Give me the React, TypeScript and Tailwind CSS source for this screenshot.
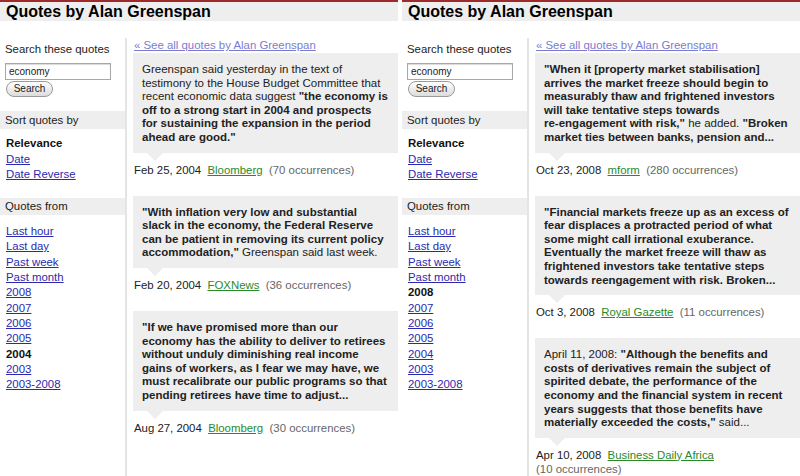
import type { ReactNode } from 'react';

type Quote = {
  body: ReactNode;
  date: string;
  source: string;
  count: string;
};

type Panel = {
  sortActive: string;
  yearActive: string;
  quotes: Quote[];
};

const sortOptions = ['Relevance', 'Date', 'Date Reverse'];
const ranges = ['Last hour', 'Last day', 'Past week', 'Past month', '2008', '2007', '2006', '2005', '2004', '2003', '2003-2008'];

const panels: Panel[] = [
  {
    sortActive: 'Relevance',
    yearActive: '2004',
    quotes: [
      {
        body: (
          <>
            Greenspan said yesterday in the text of testimony to the House Budget Committee that recent economic data suggest{' '}
            <b>"the economy is off to a strong start in 2004 and prospects for sustaining the expansion in the period ahead are good."</b>
          </>
        ),
        date: 'Feb 25, 2004',
        source: 'Bloomberg',
        count: '(70 occurrences)',
      },
      {
        body: (
          <>
            <b>
              "With inflation very low and substantial
              <br />
              slack in the economy, the Federal Reserve can be patient in removing its current policy accommodation,"
            </b>{' '}
            Greenspan said last week.
          </>
        ),
        date: 'Feb 20, 2004',
        source: 'FOXNews',
        count: '(36 occurrences)',
      },
      {
        body: (
          <b>
            "If we have promised more than our economy has the ability to deliver to retirees without unduly diminishing real income gains of workers, as I fear we may have, we must recalibrate our public programs so that pending retirees have time to adjust...
          </b>
        ),
        date: 'Aug 27, 2004',
        source: 'Bloomberg',
        count: '(30 occurrences)',
      },
    ],
  },
  {
    sortActive: 'Relevance',
    yearActive: '2008',
    quotes: [
      {
        body: (
          <>
            <b>"When it [property market stabilisation] arrives the market freeze should begin to measurably thaw and frightened investors will take tentative steps towards re&#8209;engagement with risk,"</b>{' '}
            he added. <b>"Broken market ties between banks, pension and...</b>
          </>
        ),
        date: 'Oct 23, 2008',
        source: 'mform',
        count: '(280 occurrences)',
      },
      {
        body: (
          <b>
            "Financial markets freeze up as an excess of fear displaces a protracted period of what some might call irrational exuberance. Eventually the market freeze will thaw as frightened investors take tentative steps towards reengagement with risk. Broken...
          </b>
        ),
        date: 'Oct 3, 2008',
        source: 'Royal Gazette',
        count: '(11 occurrences)',
      },
      {
        body: (
          <>
            April 11, 2008:{' '}
            <b>"Although the benefits and costs of derivatives remain the subject of spirited debate, the performance of the economy and the financial system in recent years suggests that those benefits have materially exceeded the costs,"</b>{' '}
            said...
          </>
        ),
        date: 'Apr 10, 2008',
        source: 'Business Daily Africa',
        count: '(10 occurrences)',
      },
    ],
  },
];

function NavItem({ label, active }: { label: string; active: boolean }) {
  if (active) return <div className="font-bold text-[#111]">{label}</div>;
  return (
    <div>
      <a href="#" className="text-[#2a2ab0] underline">
        {label}
      </a>
    </div>
  );
}

function Sidebar({ panel }: { panel: Panel }) {
  return (
    <div className="w-[125px] shrink-0 text-[11.4px] leading-[15.3px] text-[#222]">
      <div className="mt-[21px] px-[5px]">Search these quotes</div>
      <div className="mt-[6px] px-[5px]">
        <div className="h-[17px] w-[106px] border border-[#a8a8a8] bg-white pl-[3px] text-[10px] leading-[15px] shadow-[inset_0_1px_1px_rgba(0,0,0,0.15)]">
          economy
        </div>
        <button
          type="button"
          className="ml-px mt-px h-[16px] w-[47px] rounded-full border border-[#9a9a9a] bg-gradient-to-b from-white to-[#dcdcdc] text-[10px] leading-[14px] text-[#222]"
        >
          Search
        </button>
      </div>
      <div className="mt-[14px] h-[18px] bg-[#eeeeee] px-[5px] leading-[18px]">Sort quotes by</div>
      <div className="mt-[7px] px-[6px]">
        {sortOptions.map((s) => (
          <NavItem key={s} label={s} active={s === panel.sortActive} />
        ))}
      </div>
      <div className="mt-[16px] h-[17px] bg-[#eeeeee] px-[5px] leading-[17px]">Quotes from</div>
      <div className="mt-[9px] px-[6px]">
        {ranges.map((r) => (
          <NavItem key={r} label={r} active={r === panel.yearActive} />
        ))}
      </div>
    </div>
  );
}

function QuoteCard({ quote }: { quote: Quote }) {
  return (
    <div className="mb-[19px]">
      <div className="relative bg-[#eeeeee] pb-[8px] pl-[9px] pr-[9px] pt-[10px] text-[11.5px] leading-[13.6px] text-[#222]">
        {quote.body}
        <span className="absolute left-[14px] top-full h-0 w-0 border-x-[8px] border-t-[8px] border-x-transparent border-t-[#eeeeee]" />
      </div>
      <div className="mt-[10px] pl-px text-[11.4px] leading-[14px] text-[#222]">
        {quote.date}&nbsp;&nbsp;
        <a href="#" className="text-[#2a8a2a] underline">
          {quote.source}
        </a>
        &nbsp; <span className="whitespace-nowrap text-[#666]">{quote.count}</span>
      </div>
    </div>
  );
}

function QuotePanel({ panel }: { panel: Panel }) {
  return (
    <div className="flex h-full w-[398px] flex-col overflow-hidden">
      <div className="h-[21px] border-t-2 border-[#9e2a2a] bg-[#eeeeee] pl-[6px] text-[16px] font-bold leading-[19px] text-black">
        Quotes by Alan Greenspan
      </div>
      <div className="flex flex-1">
        <Sidebar panel={panel} />
        <div className="mt-[17px] flex-1 border-l-2 border-[#e4e4e4] pl-[6px]">
          <a href="#" className="block pl-px text-[11.4px] leading-[14px] text-[#7b7bd0] underline">
            « See all quotes by Alan Greenspan
          </a>
          <div className="mt-[1px]">
            {panel.quotes.map((q, i) => (
              <QuoteCard key={i} quote={q} />
            ))}
          </div>
        </div>
      </div>
    </div>
  );
}

export default function App() {
  return (
    <div className="flex h-[476px] w-[800px] gap-[4px] bg-white font-['Liberation_Sans',Arial,sans-serif]">
      {panels.map((p, i) => (
        <QuotePanel key={i} panel={p} />
      ))}
    </div>
  );
}
